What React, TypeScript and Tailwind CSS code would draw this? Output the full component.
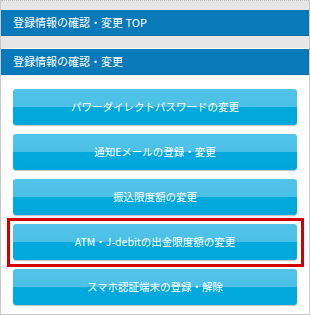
import React from "react";

const items = [
  "パワーダイレクトパスワードの変更",
  "通知Eメールの登録・変更",
  "振込限度額の変更",
  "ATM・J-debitの出金限度額の変更",
  "スマホ認証端末の登録・解除",
];

function Btn({ label }: { label: string }) {
  return (
    <div className="relative h-[36px] rounded-[3px] overflow-hidden shadow-[0_1px_1px_rgba(0,0,0,0.25)] flex items-center justify-center bg-[linear-gradient(to_bottom,#52c3e7_0%,#4bc0e6_50%,#01a9dd_50%,#00a7dc_100%)]">
      <span className="text-white text-[10.5px] leading-none tracking-[0px]">{label}</span>
    </div>
  );
}

export default function App() {
  return (
    <div
      className="w-[310px] h-[315px] bg-white border-x border-b border-[#c9c9c9] flex flex-col"
      style={{ fontFamily: '"Noto Sans CJK JP", "Noto Sans", sans-serif' }}
    >
      <div className="h-[10px] bg-[#e6e6e6] border-t border-dotted border-[#bdbdbd]" />
      <div className="h-[26px] bg-[#0879b9] border-b border-[#0a6aa3] flex items-center pl-[12px] text-white text-[11px]">
        登録情報の確認・変更 TOP
      </div>
      <div className="h-[13px] bg-[#e6e6e6] border-b border-white" />
      <div className="h-[26px] bg-[#0879b9] border-b border-[#0a6aa3] flex items-center pl-[12px] text-white text-[11px]">
        登録情報の確認・変更
      </div>
      <div className="flex flex-col gap-[9px] pt-[14px] px-[12px]">
        {items.map((label, i) =>
          i === 3 ? (
            <div key={i} className="relative">
              <div className="absolute -left-[6px] -right-[7px] -top-[6px] -bottom-[7px] border-[3px] border-[#d40000]" />
              <Btn label={label} />
            </div>
          ) : (
            <Btn key={i} label={label} />
          )
        )}
      </div>
    </div>
  );
}
